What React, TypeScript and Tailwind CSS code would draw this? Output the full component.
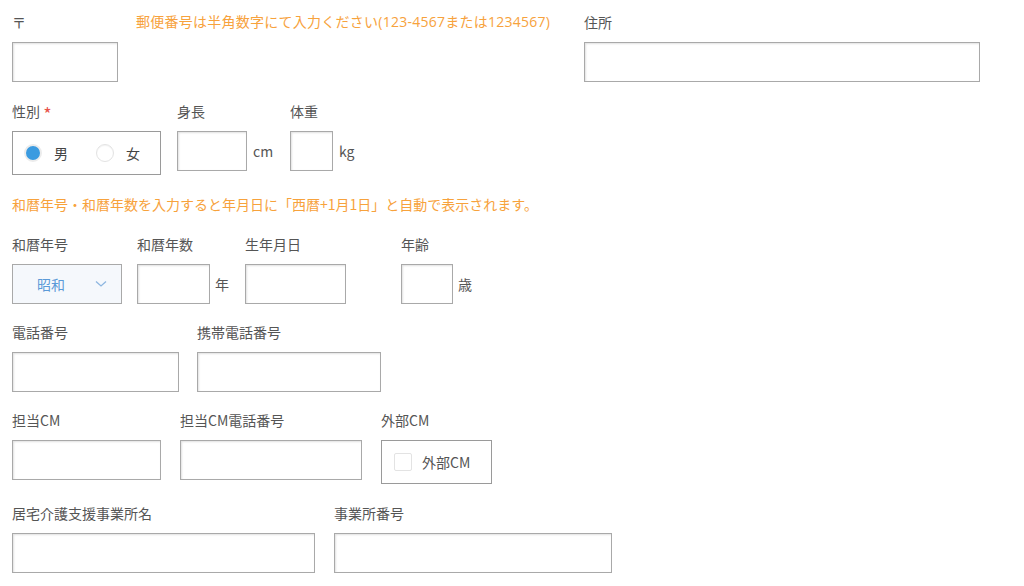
import React from 'react';

const font = { fontFamily: '"Noto Sans CJK JP", "Noto Sans", sans-serif' };
const noteFont = { fontFamily: '"Open Sans", "Noto Sans CJK JP", sans-serif' };

const inputCls =
    'h-10 border border-[#a9a9a9] bg-white shadow-[inset_1px_1px_2px_rgba(0,0,0,0.12)]';

function Label({ children }: { children: React.ReactNode }) {
    return <div className="h-5 leading-5 mb-[10px] text-[14px] text-[#555] whitespace-nowrap">{children}</div>;
}

function TextField({ label, width, className = '' }: { label: string; width: string; className?: string }) {
    return (
        <div className={`flex flex-col ${className}`}>
            <Label>{label}</Label>
            <div className={`${inputCls} ${width}`} />
        </div>
    );
}

function Radio({ checked, label }: { checked?: boolean; label: string }) {
    return (
        <div className="flex items-center">
            {checked ? (
                <span className="w-[18px] h-[18px] rounded-full border-2 border-[#ececec] bg-[#3b9be0]" />
            ) : (
                <span className="w-[18px] h-[18px] rounded-full border border-[#e3e3e3] bg-white shadow-[inset_0_1px_1px_rgba(0,0,0,0.05)]" />
            )}
            <span className="ml-3 text-[14px] text-[#444]">{label}</span>
        </div>
    );
}

export default function App() {
    return (
        <div className="min-h-screen bg-white pl-3 pt-3" style={font}>
            {/* 郵便番号・住所 */}
            <div className="flex items-start">
                <TextField label="〒" width="w-[106px]" />
                <div
                    className="ml-[18px] w-[448px] h-5 leading-5 text-[14px] tracking-[0.25px] text-[#f7a23c] whitespace-nowrap"
                    style={noteFont}
                >
                    郵便番号は半角数字にて入力ください(123-4567または1234567)
                </div>
                <TextField label="住所" width="w-[396px]" />
            </div>

            {/* 性別・身長・体重 */}
            <div className="flex items-start mt-[19px]">
                <div className="flex flex-col">
                    <Label>
                        性別 <span className="text-[18px] leading-none text-[#e8524a] align-middle">*</span>
                    </Label>
                    <div className="w-[149px] h-[44px] border border-[#9a9a9a] flex items-center pl-[11px] gap-[28px]">
                        <Radio checked label="男" />
                        <Radio label="女" />
                    </div>
                </div>
                <div className="flex flex-col ml-4 w-[113px]">
                    <Label>身長</Label>
                    <div className="flex items-center">
                        <div className={`${inputCls} w-[70px]`} />
                        <span className="ml-[6px] text-[14px] text-[#555]">cm</span>
                    </div>
                </div>
                <div className="flex flex-col">
                    <Label>体重</Label>
                    <div className="flex items-center">
                        <div className={`${inputCls} w-[43px]`} />
                        <span className="ml-[6px] text-[14px] text-[#555]">kg</span>
                    </div>
                </div>
            </div>

            <div className="mt-[19px] h-5 leading-5 text-[14px] text-[#f7a23c] whitespace-nowrap">
                和暦年号・和暦年数を入力すると年月日に「西暦+1月1日」と自動で表示されます。
            </div>

            {/* 生年月日 */}
            <div className="flex items-start mt-5">
                <div className="flex flex-col">
                    <Label>和暦年号</Label>
                    <div className="w-[110px] h-10 border border-[#a9a9a9] bg-[#f5f8fc] flex items-center pl-[24px] pr-[14px] justify-between">
                        <span className="text-[14px] text-[#5b9ad8]">昭和</span>
                        <svg width="12" height="8" viewBox="0 0 12 8" fill="none">
                            <polyline points="1,1.5 6,6 11,1.5" stroke="#8db6e0" strokeWidth="1.3" />
                        </svg>
                    </div>
                </div>
                <div className="flex flex-col ml-[15px]">
                    <Label>和暦年数</Label>
                    <div className="flex items-center">
                        <div className={`${inputCls} w-[73px]`} />
                        <span className="ml-[5px] text-[14px] text-[#555]">年</span>
                    </div>
                </div>
                <TextField label="生年月日" width="w-[101px]" className="ml-4" />
                <div className="flex flex-col ml-[55px]">
                    <Label>年齢</Label>
                    <div className="flex items-center">
                        <div className={`${inputCls} w-[52px]`} />
                        <span className="ml-[5px] text-[14px] text-[#555]">歳</span>
                    </div>
                </div>
            </div>

            {/* 電話番号 */}
            <div className="flex items-start mt-[18px]">
                <TextField label="電話番号" width="w-[167px]" />
                <TextField label="携帯電話番号" width="w-[184px]" className="ml-[18px]" />
            </div>

            {/* 担当CM */}
            <div className="flex items-start mt-[18px]">
                <TextField label="担当CM" width="w-[149px]" />
                <TextField label="担当CM電話番号" width="w-[182px]" className="ml-[19px]" />
                <div className="flex flex-col ml-[19px]">
                    <Label>外部CM</Label>
                    <div className="w-[111px] h-[44px] border border-[#9a9a9a] flex items-center pl-3">
                        <span className="w-[18px] h-[18px] border border-[#e3e3e3] rounded-[2px] bg-white" />
                        <span className="ml-[10px] text-[14px] text-[#555]">外部CM</span>
                    </div>
                </div>
            </div>

            {/* 事業所 */}
            <div className="flex items-start mt-[19px]">
                <TextField label="居宅介護支援事業所名" width="w-[303px]" />
                <TextField label="事業所番号" width="w-[278px]" className="ml-[19px]" />
            </div>
        </div>
    );
}
